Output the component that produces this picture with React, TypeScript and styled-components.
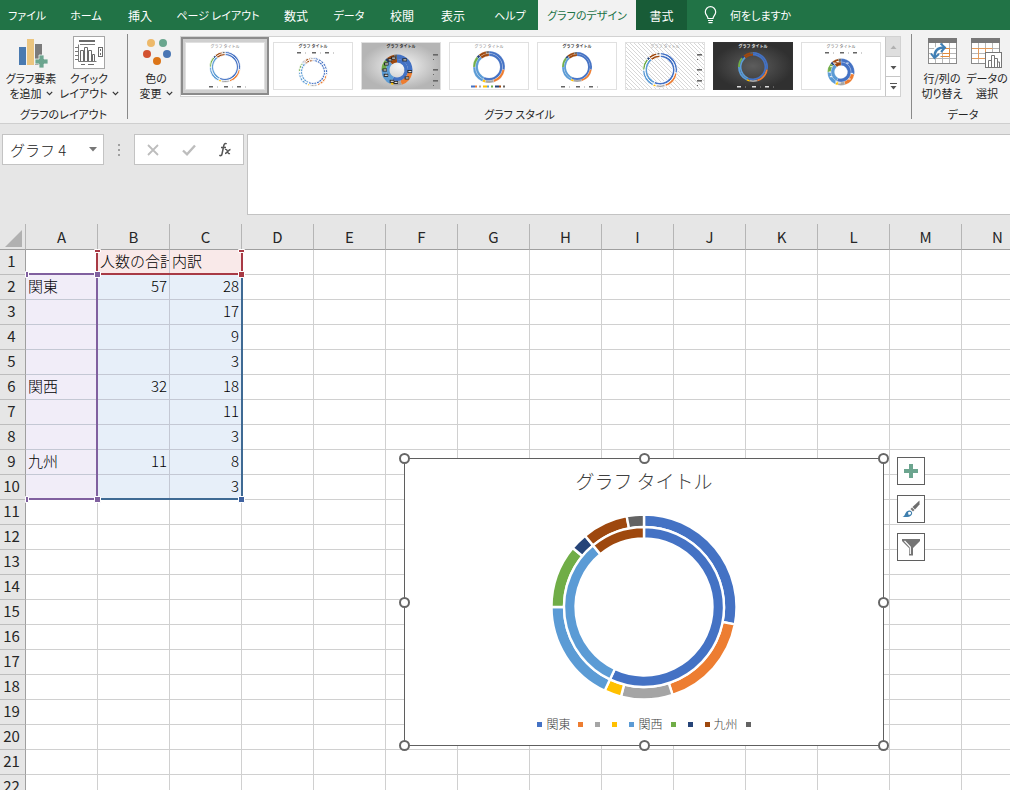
import React from "react";
import styled, { createGlobalStyle, css } from "styled-components";

const GlobalStyle = createGlobalStyle`
  *, *::before, *::after { box-sizing: border-box; }
  body {
    margin: 0;
    background: #e6e6e6;
    color: #262626;
    font-family: "Noto Sans CJK JP", "Liberation Sans", sans-serif;
    font-size: 12px;
    line-height: 15px;
  }
  button, input, textarea { font: inherit; color: inherit; margin: 0; padding: 0; border: 0; background: none; }
  svg { display: block; }
`;

/* ---------- data ---------- */

type Segment = { value: number; color: string };

const OUTER: Segment[] = [
  { value: 28, color: "#4472c4" },
  { value: 17, color: "#ed7d31" },
  { value: 9, color: "#a5a5a5" },
  { value: 3, color: "#ffc000" },
  { value: 18, color: "#5b9bd5" },
  { value: 11, color: "#70ad47" },
  { value: 3, color: "#264478" },
  { value: 8, color: "#9e480e" },
  { value: 3, color: "#636363" },
];
const INNER: Segment[] = [
  { value: 57, color: "#4472c4" },
  { value: 32, color: "#5b9bd5" },
  { value: 11, color: "#9e480e" },
];
const LEGEND_LABELS = ["関東", "", "", "", "関西", "", "", "九州", ""];

const COLUMNS = "ABCDEFGHIJKLMN".split("");
const ROWS = Array.from({ length: 22 }, (_, i) => i + 1);
const CELLS: Record<string, string | number> = {
  B1: "人数の合計", C1: "内訳",
  A2: "関東", B2: 57, C2: 28, C3: 17, C4: 9, C5: 3,
  A6: "関西", B6: 32, C6: 18, C7: 11, C8: 3,
  A9: "九州", B9: 11, C9: 8, C10: 3,
};

const TABS = [
  { label: "ファイル", width: 54, kana: true },
  { label: "ホーム", width: 64, kana: true },
  { label: "挿入", width: 44 },
  { label: "ページ レイアウト", width: 112, kana: true },
  { label: "数式", width: 44 },
  { label: "データ", width: 62, kana: true },
  { label: "校閲", width: 44 },
  { label: "表示", width: 58 },
  { label: "ヘルプ", width: 56, kana: true },
  { label: "グラフのデザイン", width: 98, tone: "active", kana: true },
  { label: "書式", width: 51, tone: "context" },
];

/* ---------- ring drawing ---------- */

function sector(cx: number, cy: number, r1: number, r0: number, from: number, to: number) {
  const point = (r: number, f: number) => {
    const a = f * Math.PI * 2 - Math.PI / 2;
    return `${(cx + r * Math.cos(a)).toFixed(2)} ${(cy + r * Math.sin(a)).toFixed(2)}`;
  };
  const large = to - from > 0.5 ? 1 : 0;
  return `M${point(r1, from)}A${r1} ${r1} 0 ${large} 1 ${point(r1, to)}L${point(r0, to)}A${r0} ${r0} 0 ${large} 0 ${point(r0, from)}Z`;
}

type RingProps = { data: Segment[]; cx: number; cy: number; r1: number; r0: number; stroke?: string; gap?: number };

function Ring({ data, cx, cy, r1, r0, stroke = "#fff", gap = 0 }: RingProps) {
  let sum = 0;
  return (
    <g stroke={stroke} strokeWidth={gap}>
      {data.map((s, i) => {
        const from = sum / 100;
        sum += s.value;
        return <path key={i} d={sector(cx, cy, r1, r0, from, sum / 100)} fill={s.color} />;
      })}
    </g>
  );
}

/* ---------- tab strip ---------- */

const Window = styled.div`
  display: flex;
  flex-direction: column;
  height: 100vh;
  overflow: hidden;
`;

const TabStrip = styled.nav`
  display: flex;
  flex: none;
  height: 30px;
  background: #217346;
`;

const Tab = styled.button<{ $width: number; $tone?: string; $kana?: boolean }>`
  flex: none;
  width: ${(p) => p.$width}px;
  color: #fff;
  font-size: ${(p) => (p.$kana ? 11 : 12)}px;
  white-space: nowrap;
  font-feature-settings: "palt";
  ${(p) => p.$tone === "active" && css`background: #f2f2f2; color: #217346;`}
  ${(p) => p.$tone === "context" && css`background: #185c37;`}
`;

const TellMe = styled.button`
  display: flex;
  align-items: center;
  gap: 12px;
  padding-left: 16px;
  color: #fff;
  font-size: 11px;
  white-space: nowrap;
  font-feature-settings: "palt";
`;

/* ---------- ribbon ---------- */

const Ribbon = styled.div`
  display: flex;
  flex: none;
  height: 94px;
  background: #f2f2f2;
  border-bottom: 1px solid #cfcfcf;
  overflow: hidden;
`;

const Group = styled.section<{ $width?: number }>`
  display: flex;
  flex-direction: column;
  ${(p) => (p.$width ? css`flex: none; width: ${p.$width}px;` : css`flex: 1; min-width: 0;`)}
`;

const GroupBody = styled.div<{ $inset?: number }>`
  display: flex;
  height: 76px;
  padding: 6px 0 0 ${(p) => p.$inset || 0}px;
`;

const GroupLabel = styled.h2<{ $shift?: number }>`
  margin: 0;
  padding-left: ${(p) => p.$shift || 0}px;
  font-size: 11px;
  line-height: 16px;
  font-weight: 400;
  text-align: center;
  font-feature-settings: "palt";
`;

const Divider = styled.div`
  flex: none;
  width: 1px;
  height: 85px;
  margin-top: 4px;
  background: #8a8a8a;
`;

const Command = styled.button<{ $width: number }>`
  display: flex;
  flex: none;
  flex-direction: column;
  align-items: center;
  width: ${(p) => p.$width}px;
  height: 66px;
  font-size: 11px;
  white-space: nowrap;
  font-feature-settings: "palt";
`;

const CommandIcon = styled.span`
  display: block;
  height: 35px;
`;

const CommandLine = styled.span`
  display: flex;
  align-items: center;
  gap: 4px;
  height: 15px;
`;

const Gallery = styled.div`
  display: flex;
  flex: none;
  height: 61px;
  border: 1px solid #d2d2d2;
  background: #fff;
`;

const StyleOption = styled.button<{ $selected?: boolean }>`
  display: grid;
  place-items: center;
  width: 88px;
  height: 58px;
  ${(p) => p.$selected && css`background: #cfcfcf; border: 2px solid #8b8b8b;`}
`;

const Scroller = styled.div`
  display: flex;
  flex-direction: column;
  width: 15px;
  border-left: 1px solid #c6c6c6;
`;

const ScrollButton = styled.button<{ $off?: boolean }>`
  display: grid;
  flex: 1;
  place-items: center;
  border-bottom: 1px solid #c6c6c6;
  background: ${(p) => (p.$off ? "#dedede" : "#fff")};
  &:last-child { border-bottom: 0; }
`;

/* ---------- formula bar ---------- */

const FormulaBar = styled.div`
  display: flex;
  flex: none;
  align-items: flex-start;
  height: 100px;
  padding: 10px 0 0 2px;
`;

const NameBox = styled.div`
  display: flex;
  align-items: center;
  width: 102px;
  height: 31px;
  border: 1px solid #c3c3c3;
  background: #fff;
`;

const NameInput = styled.input`
  flex: 1;
  min-width: 0;
  height: 29px;
  padding-left: 7px;
  font-size: 15px;
  font-weight: 300;
  color: #222;
`;

const NameDrop = styled.button`
  display: grid;
  place-items: center;
  width: 20px;
  height: 28px;
`;

const Grip = styled.span`
  display: grid;
  place-items: center;
  width: 30px;
  height: 31px;
`;

const EditButtons = styled.div`
  display: flex;
  width: 110px;
  height: 31px;
  margin-right: 3px;
  border: 1px solid #c3c3c3;
  background: #fff;
`;

const EditButton = styled.button`
  display: grid;
  flex: 1;
  place-items: center;
`;

const FormulaInput = styled.textarea`
  flex: 1;
  height: 81px;
  padding: 6px;
  border: 1px solid #c3c3c3;
  border-right: 0;
  border-radius: 0;
  background: #fff;
  font-size: 15px;
  resize: none;
  outline: 0;
`;

/* ---------- worksheet ---------- */

const Sheet = styled.main`
  position: relative;
  flex: 1;
  min-height: 0;
  overflow: hidden;
  background: #fff;
`;

const Grid = styled.table`
  width: 1034px;
  table-layout: fixed;
  border-collapse: separate;
  border-spacing: 0;
  font-size: 15px;
  line-height: 20px;
  font-weight: 300;
  color: #000;
`;

const Corner = styled.td`
  width: 26px;
  height: 26px;
  padding: 0 3px 2px 0;
  vertical-align: bottom;
  background: #e6e6e6;
  border-right: 1px solid #b5b5b5;
  border-bottom: 1px solid #9f9f9f;
  svg { margin-left: auto; }
`;

const ColumnHead = styled.th`
  width: 72px;
  height: 26px;
  padding: 0;
  font-weight: 400;
  color: #262626;
  background: #e6e6e6;
  border-right: 1px solid #b5b5b5;
  border-bottom: 1px solid #9f9f9f;
`;

const RowHead = styled.th`
  height: 25px;
  padding: 0 2px 2px 0;
  font-weight: 400;
  color: #262626;
  background: #e6e6e6;
  border-right: 1px solid #9f9f9f;
  border-bottom: 1px solid #bdbdbd;
`;

const FILLS: Record<string, string> = { series: "#f9e9e9", category: "#f1edf8", value: "#e7eff9" };

const Cell = styled.td<{ $fill?: string; $number?: boolean }>`
  height: 25px;
  padding: 0 2px 2px;
  overflow: hidden;
  white-space: nowrap;
  text-align: ${(p) => (p.$number ? "right" : "left")};
  border-right: 1px solid ${(p) => (p.$fill ? "#c4c8d4" : "#d0d0d0")};
  border-bottom: 1px solid ${(p) => (p.$fill ? "#c4c8d4" : "#d0d0d0")};
  background: ${(p) => (p.$fill ? FILLS[p.$fill] : "#fff")};
`;

const RangeMarks = styled.svg`
  position: absolute;
  left: 24px;
  top: 24px;
`;

/* ---------- floating chart ---------- */

const ChartFrame = styled.figure`
  position: absolute;
  left: 404px;
  top: 234px;
  display: flex;
  flex-direction: column;
  align-items: center;
  width: 480px;
  height: 288px;
  margin: 0;
  padding-top: 9px;
  border: 1px solid #5f5f5f;
  background: #fff;
  color: #404040;
`;

const ChartTitle = styled.figcaption`
  font-size: 19px;
  line-height: 26px;
  font-weight: 300;
`;

const Plot = styled.svg`
  margin-top: 20px;
`;

const Legend = styled.ul`
  display: flex;
  gap: 8px;
  margin: 15px 0 0;
  padding: 0 0 0 4px;
  list-style: none;
`;

const LegendItem = styled.li<{ $color: string }>`
  display: flex;
  align-items: center;
  gap: 4px;
  height: 18px;
  line-height: 18px;
  font-weight: 300;
  &::before {
    content: "";
    width: 5px;
    height: 5px;
    background: ${(p) => p.$color};
  }
`;

const Handles = styled.div`
  position: absolute;
  inset: -1px 0 0 -1px;
`;

const Handle = styled.span<{ $x: string; $y: string }>`
  position: absolute;
  left: ${(p) => p.$x};
  top: ${(p) => p.$y};
  width: 11px;
  height: 11px;
  margin: -5px 0 0 -5px;
  border: 2px solid #666;
  border-radius: 50%;
  background: #fff;
`;

const ChartTools = styled.div`
  position: absolute;
  left: 897px;
  top: 233px;
  display: flex;
  flex-direction: column;
  gap: 10px;
`;

const ChartTool = styled.button`
  display: grid;
  place-items: center;
  width: 28px;
  height: 28px;
  border: 1px solid #5f5f5f;
  background: #fff;
`;

/* ---------- icons ---------- */

const Chevron = () => (
  <svg width="7" height="5" viewBox="0 0 7 5" fill="none" stroke="#333" strokeWidth="1.2"><path d="M.8.8 3.5 3.6 6.2.8" /></svg>
);

const AddElementIcon = () => (
  <svg width="34" height="33" viewBox="-4 0 34 33">
    <rect x="1" y="11" width="7" height="18" fill="#4a7ab0" />
    <rect x="9" y="3" width="7" height="26" fill="#ebc57f" />
    <rect x="17" y="8" width="7" height="21" fill="#7b7b7b" />
    <path d="M21 19h5v4h4v5h-4v4h-5v-4h-4v-5h4z" fill="#6ca58f" stroke="#f2f2f2" strokeWidth=".8" />
  </svg>
);

const QuickLayoutIcon = () => (
  <svg width="32" height="33" viewBox="0 0 32 33" fill="none" stroke="#6b6b6b">
    <rect x=".5" y=".5" width="31" height="32" fill="#fff" stroke="#a6a6a6" />
    <path d="M6 5h16" strokeWidth="2" />
    <path d="M5.500 8.500v17h18M7 8.500h15M2 11.500h3M2 15.500h3M2 19.500h3M2 23.500h3" strokeWidth=".9" />
    <path d="M7.500 25V14.500h3V25M11.500 25V11.500h3V25M15.500 25V14.500h3V25M19.500 25v-6.500h2V25" />
    <rect x="25.500" y="11.500" width="4" height="9" />
    <path d="M27.500 13v2M27.500 17v2M8 28.500h4M15 28.500h6" />
  </svg>
);

const ChangeColorsIcon = () => (
  <svg width="30" height="33" viewBox="0 0 30 33">
    <circle cx="10" cy="7" r="4" fill="#edb96a" />
    <circle cx="22" cy="7" r="4" fill="#6aa68e" />
    <circle cx="6" cy="18" r="4" fill="#d35230" />
    <circle cx="26" cy="18" r="4" fill="#4a76b4" />
    <circle cx="16" cy="25" r="4" fill="#dc7518" />
  </svg>
);

const TableLines = () => (
  <>
    <rect x=".5" y="2.500" width="28" height="25" fill="#fff" stroke="#8a8a8a" />
    <rect x="0" y="2" width="29" height="5" fill="#787878" />
    <path d="M1 12.500h27M1 17.500h27M1 22.500h27M7.500 7v20M14.500 7v20M21.500 7v20" stroke="#b7b7b7" fill="none" />
  </>
);

const SwitchIcon = () => (
  <svg width="29" height="33" viewBox="0 0 29 33">
    <TableLines />
    <path d="M14.500 12.500h7v8h-9M14.500 17.500h7" fill="none" stroke="#e08a3c" />
    <path d="M6.500 20C6.500 14 10 11.500 15 11.500" fill="none" stroke="#fff" strokeWidth="5" />
    <path d="M6.500 21C6.500 14.500 10 11.500 16 11.500" fill="none" stroke="#3f7fb5" strokeWidth="2.400" />
    <path d="M12.500 7.500 17 11.500 13 16M3 17.500 6.500 22 11 18" fill="none" stroke="#3f7fb5" strokeWidth="2" />
  </svg>
);

const SelectDataIcon = () => (
  <svg width="32" height="33" viewBox="0 0 32 33">
    <TableLines />
    <path d="M1 12.500h20.500M7.500 12v10M14.500 12v10M1 22.500h14" fill="none" stroke="#e39b5c" />
    <rect x="14.500" y="16.500" width="16" height="15" fill="#fff" stroke="#777" />
    <path d="M17.500 31v-6.500h3V31M20.500 31V19.500h3V31M23.500 31v-8.500h3V31M26.500 31v-5h2v5" fill="none" stroke="#777" />
  </svg>
);

const BulbIcon = () => (
  <svg width="15" height="18" viewBox="0 0 15 18" fill="none" stroke="#fff" strokeWidth="1.200">
    <path d="M5 12.500C5 10 2.300 9 2.300 5.900a5.200 5.200 0 0 1 10.400 0C12.700 9 10 10 10 12.500zM5 14.500h5M5.500 16.700h4" />
  </svg>
);

const Triangle = ({ up, bar, color = "#555" }: { up?: boolean; bar?: boolean; color?: string }) => (
  <svg width="7" height="8" viewBox="0 0 7 8" fill={color}>
    {bar && <rect width="7" height="1" />}
    <path d={up ? "M.5 6h6L3.500 2.500z" : "M.5 3h6L3.500 6.500z"} />
  </svg>
);

/* ---------- gallery previews ---------- */

type Preview = {
  cx?: number; cy?: number; r: number; hole: number; split?: number; gap?: number;
  background?: string; title?: string; bold?: boolean; legend: "bottom" | "top" | "right" | "color"; ticks?: boolean; dashed?: boolean;
};

const PREVIEWS: Preview[] = [
  { r: 15.5, hole: 11.5, split: 13.5, gap: 0.8, title: "#777", legend: "bottom" },
  { cy: 30, r: 14.5, hole: 10.5, split: 12.5, gap: 0.9, title: "#444", bold: true, legend: "top", dashed: true },
  { cx: 36, cy: 28, r: 15.5, hole: 7.5, split: 11, background: "url(#silver)", title: "#222", bold: true, legend: "right", ticks: true },
  { r: 16, hole: 11, split: 13.5, gap: 0.2, title: "#777", legend: "color" },
  { r: 15, hole: 11, split: 13, gap: 0.1, title: "#333", bold: true, legend: "bottom" },
  { cx: 35, cy: 28, r: 17.5, hole: 12.5, split: 15, gap: 1, background: "url(#hatch)", title: "#999", legend: "right" },
  { r: 15, hole: 11.5, split: 13.2, background: "url(#night)", title: "#eee", bold: true, legend: "bottom" },
  { cy: 30, r: 13.5, hole: 6.5, split: 10, gap: 0.2, title: "#555", legend: "top", ticks: true },
];

function StylePreview({ spec, index }: { spec: Preview; index: number }) {
  const { cx = 40, cy = 25, r, hole, split = hole, gap = 0, background = "#fff", title, bold, legend } = spec;
  const mark = index === 6 ? "#ddd" : "#666";
  const y = legend === "top" ? 10 : 44;
  return (
    <svg width="80" height="48" viewBox="0 0 80 48" aria-hidden="true">
      <defs>
        <radialGradient id="silver"><stop offset="0" stopColor="#f7f7f7" /><stop offset="1" stopColor="#b5b5b5" /></radialGradient>
        <radialGradient id="night"><stop offset="0" stopColor="#5d5d5d" /><stop offset="1" stopColor="#303030" /></radialGradient>
        <pattern id="hatch" width="4" height="4" patternUnits="userSpaceOnUse">
          <rect width="4" height="4" fill="#fff" /><path d="M-1-1 5 5M-1 3 1 5M3-1 5 1" stroke="#d2d2d2" strokeWidth=".9" />
        </pattern>
      </defs>
      <rect x=".5" y=".5" width="79" height="47" fill={background} stroke={index === 6 ? "#333" : "#e0e0e0"} />
      <text x="40" y="6" fontSize="4" fontWeight={bold ? 700 : 400} textAnchor="middle" fill={title}>グラフ タイトル</text>
      <Ring data={OUTER} cx={cx} cy={cy} r1={r} r0={split} gap={gap} />
      <Ring data={INNER} cx={cx} cy={cy} r1={split} r0={hole} gap={gap} />
      {spec.dashed && <circle cx={cx} cy={cy} r="12.500" fill="none" stroke="#fff" strokeWidth="4" strokeDasharray="1 2" />}
      {spec.ticks && [0.1, 0.27, 0.36, 0.52, 0.57, 0.68, 0.75, 0.83, 0.9, 0.95].map((f) => {
        const a = f * Math.PI * 2 - Math.PI / 2;
        const d = (r + hole) / 2 + 1;
        const x = cx + d * Math.cos(a);
        const ty = cy + d * Math.sin(a);
        return index === 2
          ? <g key={f}><rect x={x - 2} y={ty - 1.5} width="4.500" height="3" fill="#222" /><rect x={x - 1} y={ty - 0.6} width="3" height="1.200" fill="#ddd" /></g>
          : <rect key={f} x={x - 1.2} y={ty - 0.5} width="2.400" height="1" fill="#fff" />;
      })}
      {legend === "right"
        ? [12, 27, 38].map((ly) => <g key={ly} fill={mark}><rect x="72" y={ly} width="5" height="1.600" /><rect x="72" y={ly + 5} width="1" height="1" /></g>)
        : legend === "color"
          ? OUTER.map((s, i) => <rect key={i} x={22 + i * 4} y="43.500" width={i % 3 ? 2 : 4} height="2" fill={s.color} />)
          : [24, 39, 52].map((lx) => <g key={lx} fill={mark}><rect x={lx} y={y} width="4" height="1.500" /><rect x={lx + 8} y={y + 0.5} width="1" height="1" opacity=".6" /></g>)}
    </svg>
  );
}

/* ---------- page ---------- */

function fillOf(col: string, row: number) {
  if (row === 1 && (col === "B" || col === "C")) return "series";
  if (row >= 2 && row <= 10) {
    if (col === "A") return "category";
    if (col === "B" || col === "C") return "value";
  }
  return undefined;
}

function CommandButton({ icon, lines, width, menu }: { icon: React.ReactNode; lines: [string, string]; width: number; menu?: boolean }) {
  return (
    <Command $width={width}>
      <CommandIcon>{icon}</CommandIcon>
      <CommandLine>{lines[0]}</CommandLine>
      <CommandLine>{lines[1]}{menu && <Chevron />}</CommandLine>
    </Command>
  );
}

const HANDLES = [["0%", "0%"], ["50%", "0%"], ["100%", "0%"], ["0%", "50%"], ["100%", "50%"], ["0%", "100%"], ["50%", "100%"], ["100%", "100%"]];

export default function App() {
  return (
    <Window>
      <GlobalStyle />
      <TabStrip>
        {TABS.map((t) => <Tab key={t.label} $width={t.width} $tone={t.tone} $kana={t.kana}>{t.label}</Tab>)}
        <TellMe><BulbIcon />何をしますか</TellMe>
      </TabStrip>

      <Ribbon>
        <Group $width={127}>
          <GroupBody $inset={2}>
            <CommandButton icon={<AddElementIcon />} lines={["グラフ要素", "を追加"]} width={58} menu />
            <CommandButton icon={<QuickLayoutIcon />} lines={["クイック", "レイアウト"]} width={58} menu />
          </GroupBody>
          <GroupLabel>グラフのレイアウト</GroupLabel>
        </Group>
        <Divider />
        <Group>
          <GroupBody $inset={4}>
            <CommandButton icon={<ChangeColorsIcon />} lines={["色の", "変更"]} width={48} menu />
            <Gallery>
              {PREVIEWS.map((p, i) => (
                <StyleOption key={i} $selected={i === 0} aria-label={`スタイル ${i + 1}`}>
                  <StylePreview spec={p} index={i} />
                </StyleOption>
              ))}
              <Scroller>
                <ScrollButton $off aria-label="前へ"><Triangle up color="#b0b0b0" /></ScrollButton>
                <ScrollButton aria-label="次へ"><Triangle /></ScrollButton>
                <ScrollButton aria-label="その他"><Triangle bar /></ScrollButton>
              </Scroller>
            </Gallery>
          </GroupBody>
          <GroupLabel>グラフ スタイル</GroupLabel>
        </Group>
        <Divider />
        <Group $width={98}>
          <GroupBody $inset={6}>
            <CommandButton icon={<SwitchIcon />} lines={["行/列の", "切り替え"]} width={48} />
            <CommandButton icon={<SelectDataIcon />} lines={["データの", "選択"]} width={42} />
          </GroupBody>
          <GroupLabel $shift={4}>データ</GroupLabel>
        </Group>
      </Ribbon>

      <FormulaBar>
        <NameBox>
          <NameInput aria-label="名前ボックス" defaultValue="グラフ 4" />
          <NameDrop aria-label="名前の一覧"><svg width="8" height="5" viewBox="0 0 8 5"><path d="M0 0h8L4 4.500z" fill="#777" /></svg></NameDrop>
        </NameBox>
        <Grip><svg width="2" height="12" viewBox="0 0 2 12" fill="#a0a0a0"><rect width="2" height="2" /><rect y="5" width="2" height="2" /><rect y="10" width="2" height="2" /></svg></Grip>
        <EditButtons>
          <EditButton aria-label="キャンセル"><svg width="12" height="12" viewBox="0 0 12 12" stroke="#bdbdbd" strokeWidth="1.800"><path d="M1 1 11 11M11 1 1 11" /></svg></EditButton>
          <EditButton aria-label="入力"><svg width="14" height="12" viewBox="0 0 14 12" fill="none" stroke="#bdbdbd" strokeWidth="2.400"><path d="M1 6.500 5 10.300 13 1.500" /></svg></EditButton>
          <EditButton aria-label="関数の挿入">
            <svg width="14" height="15" viewBox="0 0 14 15" fill="none" stroke="#555">
              <path d="M8.600 2C7.400.8 6.200 1.600 5.800 3.500L4 12c-.4 1.800-1.600 2-2.600 1.200M3 5.500h5" strokeWidth="1.500" />
              <path d="M7 7.500c1.500-.6 2 .4 2.500 2s1 2.500 2.500 2M12.500 7.500C10.500 7.500 9 11.500 7 11.500" strokeWidth="1.300" />
            </svg>
          </EditButton>
        </EditButtons>
        <FormulaInput aria-label="数式バー" />
      </FormulaBar>

      <Sheet>
        <Grid>
          <thead>
            <tr>
              <Corner><svg width="17" height="17" viewBox="0 0 17 17"><path d="M17 0v17H0z" fill="#b1b1b1" /></svg></Corner>
              {COLUMNS.map((c) => <ColumnHead key={c} scope="col">{c}</ColumnHead>)}
            </tr>
          </thead>
          <tbody>
            {ROWS.map((r) => (
              <tr key={r}>
                <RowHead scope="row">{r}</RowHead>
                {COLUMNS.map((c) => {
                  const value = CELLS[c + r];
                  return <Cell key={c} $fill={fillOf(c, r)} $number={typeof value === "number"}>{value}</Cell>;
                })}
              </tr>
            ))}
          </tbody>
        </Grid>

        <RangeMarks width="222" height="256" viewBox="0 0 222 256" aria-hidden="true">
          <path d="M74 251h144V30" fill="none" stroke="#3f6a94" strokeWidth="2" />
          <path d="M73 2v24h145V2" fill="none" stroke="#a83a45" strokeWidth="2" />
          <path d="M2 26h71v225H2" fill="none" stroke="#80609f" strokeWidth="2" />
          <g stroke="#fff">
            <path d="M70.500 1.500h6v3h-6zM214.500 1.500h6v3h-6zM214.500 23.500h6v6h-6z" fill="#a83a45" />
            <path d="M70.500 23.500h6v6h-6zM70.500 248.500h6v6h-6zM1.500 23.500h3v6h-3zM1.500 248.500h3v6h-3z" fill="#80609f" />
            <path d="M214.500 248.500h6v6h-6z" fill="#3f62a0" />
          </g>
        </RangeMarks>

        <ChartFrame>
          <ChartTitle>グラフ タイトル</ChartTitle>
          <Plot width="186" height="186" viewBox="0 0 186 186" role="img" aria-label="ドーナツ グラフ">
            <Ring data={OUTER} cx={93} cy={93} r1={92.5} r0={80} gap={2.4} />
            <Ring data={INNER} cx={93} cy={93} r1={80} r0={68.5} gap={2.4} />
          </Plot>
          <Legend>
            {OUTER.map((s, i) => <LegendItem key={i} $color={s.color}><span>{LEGEND_LABELS[i]}</span></LegendItem>)}
          </Legend>
          <Handles>
            {HANDLES.map(([x, y]) => <Handle key={x + y} $x={x} $y={y} />)}
          </Handles>
        </ChartFrame>

        <ChartTools>
          <ChartTool aria-label="グラフ要素"><svg width="14" height="14" viewBox="0 0 14 14"><path d="M5 0h4v5h5v4H9v5H5V9H0V5h5z" fill="#6ca58f" /></svg></ChartTool>
          <ChartTool aria-label="グラフ スタイル">
            <svg width="18" height="18" viewBox="0 0 18 18">
              <path d="M17.500.5v4l-4.500 5-2.500-2.500z" fill="#6d6d6d" />
              <path d="M10 7.500 12.500 10 11 11.500 8.500 9z" fill="#777" />
              <path d="M.5 17c3-1 2.500-6 6.500-6.500 3 0 4 2.500 2.500 4.500-1.500 2.200-5 2.300-9 2z" fill="#3f7fae" />
              <path d="M6 12.500c1.500-1.500 3.500-.5 3 1s-2 1.500-2.500 1.200" fill="#fff" />
            </svg>
          </ChartTool>
          <ChartTool aria-label="グラフ フィルター">
            <svg width="18" height="17" viewBox="0 0 18 17">
              <path d="M0 0h18v2l-7 7v7.500H7V9L0 2z" fill="#757575" />
              <path d="M2.500 1.800 8.300 8v7" fill="none" stroke="#fff" strokeWidth="1.200" />
            </svg>
          </ChartTool>
        </ChartTools>
      </Sheet>
    </Window>
  );
}
